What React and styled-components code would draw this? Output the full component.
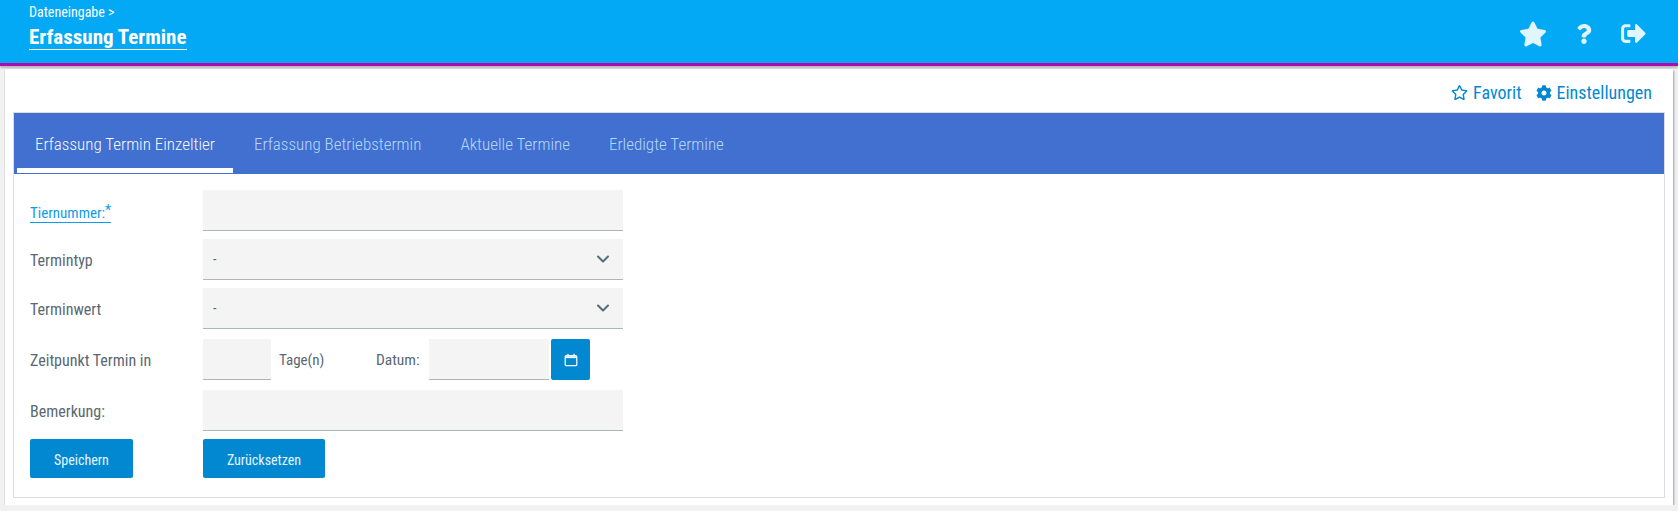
import React from 'react'
import styled, { createGlobalStyle } from 'styled-components'
import { FaStar, FaRegStar, FaQuestion, FaCog, FaSignOutAlt } from 'react-icons/fa'
import { FiChevronDown } from 'react-icons/fi'

const GlobalStyle = createGlobalStyle`
  html, body {
    margin: 0;
    background: #f1f1f1;
    font-family: 'Roboto', 'Liberation Sans', sans-serif;
    font-stretch: 75%;
    overflow: hidden;
  }
  * { box-sizing: border-box; }
`

const Header = styled.header`
  height: 66px;
  background: #03a9f4;
  border-bottom: 3px solid #b00bb0;
  box-shadow: 0 2px 2px rgba(0, 0, 0, 0.25);
  padding: 4px 0 0 29px;
  display: flex;
  justify-content: space-between;
  color: #fff;
`

const Crumb = styled.div`
  font-size: 14px;
  line-height: 16px;
`

const PageTitle = styled.h1`
  display: inline-block;
  margin: 5px 0 0;
  font-size: 21px;
  line-height: 24px;
  font-weight: 700;
  border-bottom: 1px solid #fff;
`

const HeaderIcons = styled.div`
  display: flex;
  align-items: center;
  gap: 27px;
  padding: 0 32px 0 0;
  color: #e1f5fe;
`

const Card = styled.main`
  margin: 3px 5px 0;
  height: 436px;
  background: #fff;
  box-shadow: 1px 2px 2px rgba(70, 80, 110, 0.45), 0 0 1px rgba(0, 0, 0, 0.25);
  padding: 0 8px;
  display: flex;
  flex-direction: column;
`

const TopLinks = styled.div`
  height: 43px;
  padding: 4px 13px 0 0;
  display: flex;
  justify-content: flex-end;
  align-items: center;
  gap: 14px;
`

const TopLink = styled.a`
  display: flex;
  align-items: center;
  gap: 5px;
  color: #0288d1;
  font-size: 18px;
`

const Frame = styled.section`
  border: 1px solid #dcdcdc;
  height: 386px;
`

const Tabs = styled.nav`
  height: 61px;
  background: #4170d0;
  display: flex;
  padding-left: 3px;
`

const Tab = styled.div`
  height: 60px;
  padding: 6px 18px 0;
  margin-right: 3px;
  display: flex;
  align-items: center;
  font-size: 17px;
  font-weight: 300;
  color: ${p => (p.$active ? '#f4f9fe' : '#b5d8fb')};
  border-bottom: 5px solid ${p => (p.$active ? '#fff' : 'transparent')};
`

const Form = styled.div`
  padding: 16px 0 0 16px;
  display: flex;
  flex-direction: column;
`

const Row = styled.div`
  display: flex;
  align-items: ${p => p.$align || 'center'};
  height: 41px;
  margin-bottom: ${p => p.$gap || 8}px;
`

const Label = styled.label`
  width: 173px;
  padding-top: 2px;
  font-size: 16px;
  color: #5a6872;
`

const RequiredLabel = styled.a`
  font-size: 15px;
  color: #0f9be8;
  border-bottom: 1px solid #0f9be8;
  line-height: 17px;
  sup {
    font-size: 14px;
    line-height: 0;
    vertical-align: 3px;
  }
`

const LabelCell = styled.div`
  width: 173px;
  padding-top: 3px;
`

const Field = styled.div`
  width: ${p => p.$w || 420}px;
  height: 41px;
  background: #f4f4f4;
  border-bottom: 1px solid #aab7bf;
  display: flex;
  align-items: center;
  justify-content: space-between;
  padding: 0 10px;
  font-size: 14px;
  color: #5a6872;
`

const Chevron = styled(FiChevronDown)`
  font-size: 20px;
  color: #546e7a;
  stroke-width: 2.5;
`

const Unit = styled.span`
  width: ${p => p.$w}px;
  margin-left: ${p => p.$left || 0}px;
  padding-top: 1px;
  font-size: ${p => p.$size || 15}px;
  color: #5a6872;
`

const CalButton = styled.button`
  width: 39px;
  height: 41px;
  margin-left: 2px;
  border: 0;
  border-radius: 2px;
  background: #0288d1;
  display: flex;
  align-items: center;
  justify-content: center;
  padding: 0;
`

const Button = styled.button`
  width: ${p => p.$w}px;
  height: 39px;
  margin-right: ${p => p.$right || 0}px;
  padding: 2px 0 0;
  border: 0;
  border-radius: 2px;
  background: #0288d1;
  color: #e8f4fd;
  font-family: inherit;
  font-stretch: inherit;
  font-size: 14px;
  font-weight: 450;
`

const CalendarIcon = () => (
  <svg width="14" height="14" viewBox="0 0 14 14" fill="none">
    <rect x="1.2" y="2.7" width="11.6" height="10" rx="1" stroke="#fff" strokeWidth="1.2" />
    <path d="M1 4.2h12" stroke="#fff" strokeWidth="1.8" />
    <path d="M4 .8v2.4M10 .8v2.4" stroke="#fff" strokeWidth="1.2" />
  </svg>
)

const App = () => (
  <>
    <GlobalStyle />
    <Header>
      <div>
        <Crumb>Dateneingabe &gt;</Crumb>
        <PageTitle>Erfassung Termine</PageTitle>
      </div>
      <HeaderIcons>
        <FaStar size={28} />
        <FaQuestion size={20} />
        <FaSignOutAlt size={25} />
      </HeaderIcons>
    </Header>
    <Card>
      <TopLinks>
        <TopLink><FaRegStar size={17} />Favorit</TopLink>
        <TopLink><FaCog size={16} />Einstellungen</TopLink>
      </TopLinks>
      <Frame>
        <Tabs>
          <Tab $active>Erfassung Termin Einzeltier</Tab>
          <Tab>Erfassung Betriebstermin</Tab>
          <Tab>Aktuelle Termine</Tab>
          <Tab>Erledigte Termine</Tab>
        </Tabs>
        <Form>
          <Row>
            <LabelCell><RequiredLabel>Tiernummer:<sup>*</sup></RequiredLabel></LabelCell>
            <Field />
          </Row>
          <Row>
            <Label>Termintyp</Label>
            <Field>-<Chevron /></Field>
          </Row>
          <Row $gap={10}>
            <Label>Terminwert</Label>
            <Field>-<Chevron /></Field>
          </Row>
          <Row $gap={10}>
            <Label>Zeitpunkt Termin in</Label>
            <Field $w={68} />
            <Unit $left={8} $w={97}>Tage(n)</Unit>
            <Unit $w={53} $size={15.5}>Datum:</Unit>
            <Field $w={120} />
            <CalButton><CalendarIcon /></CalButton>
          </Row>
          <Row>
            <Label>Bemerkung:</Label>
            <Field />
          </Row>
          <Row $align="flex-start">
            <Button $w={103} $right={70}>Speichern</Button>
            <Button $w={122}>Zurücksetzen</Button>
          </Row>
        </Form>
      </Frame>
    </Card>
  </>
)

export default App
